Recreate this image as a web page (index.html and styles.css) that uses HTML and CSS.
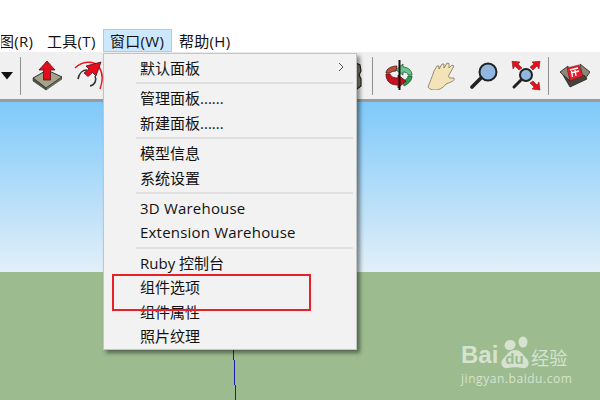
FILE: index.html
```html
<!DOCTYPE html>
<html lang="zh-CN">
<head>
    <meta charset="UTF-8">
    <title>窗口菜单</title>
    <link rel="stylesheet" href="styles.css">
</head>
<body>
    <div class="app">
        <div class="menubar">
            <span class="menubar-item clipped">图(R)</span>
            <span class="menubar-item">工具(T)</span>
            <span class="menubar-item open">窗口(W)</span>
            <span class="menubar-item">帮助(H)</span>
        </div>

        <div class="toolbar">
            <svg class="tool-arrow" width="12" height="8" viewBox="0 0 12 8"><path d="M0 0H12L6 7.500Z" fill="#111"/></svg>
            <span class="tool-sep first"></span>
            <svg class="tool-push" width="30" height="30" viewBox="0 0 30 30">
                <path d="M1 17L15 9L30 16L14 27Z" fill="#a3a38a" stroke="#333" stroke-width="1"/>
                <path d="M1 17L14 27V29L1 20Z" fill="#55553f" stroke="#333" stroke-width=".6"/>
                <path d="M14 27L30 16V18L14 29Z" fill="#77775e" stroke="#333" stroke-width=".6"/>
                <path d="M15 0L23 9H18.500V19H11.500V9H7Z" fill="#e00d1c" stroke="#5a1015" stroke-width=".8"/>
            </svg>
            <svg class="tool-move" width="30" height="30" viewBox="0 0 30 30">
                <path d="M1 7C8 0 20 -1 25 6C29 12 29 20 26 28" fill="none" stroke="#e8141f" stroke-width="1.400"/>
                <path d="M4 18C5 12 9 9 13 9" fill="none" stroke="#333" stroke-width="1.600"/>
                <path d="M21 15C23 19 21 24 16 25" fill="none" stroke="#333" stroke-width="1.600"/>
                <path d="M27 1L22 15L18.500 11.500L14 15.500L10 12L15 8L12 5Z" fill="#e80d1c" stroke="#4a1015" stroke-width=".8"/>
            </svg>
            <span class="tool-hidden">
                <svg width="6" height="28" viewBox="0 0 6 28"><path d="M0 1L4 3L5 9L3 13L5 17L5 24L1 27L0 27Z" fill="#8a8070" stroke="#222" stroke-width="1.200"/></svg>
            </span>
            <span class="tool-sep"></span>
            <svg class="tool-orbit" width="29" height="32" viewBox="0 0 29 32">
                <path d="M1 13C1 9 6 6 12 6L11 11C8 11 6 12 5 13Z" fill="#b85040" stroke="#501512" stroke-width=".8"/>
                <path d="M27 15C27 10 22 7 18 7V4L11 10L18 15V12C21 12 23 13 23 15Z" fill="#6ac58c" stroke="#1d5a38" stroke-width=".8"/>
                <path d="M27 16C27 21 23 24 19 26L18 21C21 20 23 18 23 16Z" fill="#2f9a58" stroke="#1d5a38" stroke-width=".8"/>
                <path d="M1 14C1 22 6 25 13 25V28L21 21L13 15V18C9 18 6 17 5 14Z" fill="#c8101f" stroke="#501512" stroke-width=".8"/>
                <path d="M14.500 0V30" stroke="#111" stroke-width="2"/>
            </svg>
            <svg class="tool-hand" width="28" height="28" viewBox="0 0 28 28">
                <path d="M1 25C3 20 5 15 7 9L10 4L12 4L12 7L15 2L17 2L17 6L20 1L22 1.500L22 6L25 3L27 4L22 13C21 15 22 16 24 16L27 16C28 18 26 19 24 20L19 22C17 25 13 28 8 28C5 28 2 27 1 25Z" fill="#f4e2b8" stroke="#7a7460" stroke-width=".8"/>
            </svg>
            <svg class="tool-zoom" width="28" height="28" viewBox="0 0 28 28">
                <circle cx="18" cy="10" r="8.500" fill="#8fb7df" stroke="#222" stroke-width="2"/>
                <path d="M11 16L2 25" stroke="#222" stroke-width="3.600" stroke-linecap="round"/>
            </svg>
            <svg class="tool-extents" width="30" height="30" viewBox="0 0 30 30">
                <circle cx="15" cy="14" r="6" fill="#8fb7df" stroke="#222" stroke-width="2"/>
                <path d="M10 19L3 26" stroke="#222" stroke-width="3" stroke-linecap="round"/>
                <path d="M1 0L9 1L7 3L11 7L8 9L4 5L2 8ZM29 0L28 8L26 5L22 9L19 6L23 3L21 1ZM29 29L21 28L23 26L19 22L22 20L26 24L28 21Z" fill="#e5101c" stroke="#6a1014" stroke-width=".5"/>
            </svg>
            <span class="tool-sep last"></span>
            <svg class="tool-box" width="30" height="28" viewBox="0 0 30 28">
                <path d="M0 10L8 4L10 19L4 14Z" fill="#8a8878" stroke="#222" stroke-width=".8"/>
                <path d="M20 2L30 10L25 17L22 13Z" fill="#8a8878" stroke="#222" stroke-width=".8"/>
                <path d="M3 13L10 25L27 17L24 13L10 19Z" fill="#44443c" stroke="#222" stroke-width=".8"/>
                <path d="M7 6L19 3L23 14L10 19Z" fill="#e2202c" stroke="#8a1018" stroke-width=".6"/>
                <path d="M10 8L18 6M11 11L19 9M12.500 15L11.500 9M16 14L15 8" stroke="#fff" stroke-width="1.300" fill="none"/>
            </svg>
        </div>

        <div class="viewport">
            <div class="sky"></div>
            <div class="ground"></div>
        </div>
    </div>

    <div class="axis">
        <span class="axis-seg one"></span>
        <span class="axis-seg two"></span>
        <span class="axis-seg three"></span>
    </div>

    <div class="menu">
        <div class="menu-item">默认面板
            <svg class="chevron" width="6" height="10" viewBox="0 0 6 10"><path d="M1 1L5 5L1 9" fill="none" stroke="#555" stroke-width="1"/></svg>
        </div>
        <div class="menu-sep"></div>
        <div class="menu-item">管理面板......</div>
        <div class="menu-item">新建面板......</div>
        <div class="menu-sep"></div>
        <div class="menu-item">模型信息</div>
        <div class="menu-item">系统设置</div>
        <div class="menu-sep"></div>
        <div class="menu-item latin">3D Warehouse</div>
        <div class="menu-item latin">Extension Warehouse</div>
        <div class="menu-sep"></div>
        <div class="menu-item">Ruby 控制台</div>
        <div class="menu-item">组件选项</div>
        <div class="menu-item">组件属性</div>
        <div class="menu-item">照片纹理</div>
    </div>

    <div class="highlight"></div>

    <div class="watermark">
        <div class="wm-top">
            <span class="wm-bai">Bai</span>
            <div class="wm-paw">
                <svg width="31" height="34" viewBox="0 0 31 34">
                    <ellipse cx="11" cy="10" rx="5.500" ry="5" transform="rotate(-20 11 10)"/>
                    <ellipse cx="24" cy="7" rx="4.500" ry="5.500"/>
                    <path d="M16 15C22 15 24 20 28 24C32 29 28 34 23 33C19 32 13 32 9 33C4 34 0 29 4 24C8 20 10 15 16 15Z"/>
                </svg>
                <span class="wm-du">du</span>
            </div>
            <span class="wm-cn">经验</span>
        </div>
        <div class="wm-url">jingyan.baidu.com</div>
    </div>
</body>
</html>
```

FILE: styles.css
```css
html, body {
    margin: 0;
    height: 100%;
    overflow: hidden;
}
body {
    position: relative;
    font-family: "Open Sans", "Noto Sans CJK SC", sans-serif;
    color: #111;
    background-color: white;
}
.app {
    display: flex;
    flex-direction: column;
    height: 400px;
    padding-top: 29px;
    box-sizing: border-box;
}

.menubar {
    display: flex;
    height: 23px;
    font-size: 15px;
    letter-spacing: 0.3px;
}
.menubar-item {
    padding: 0 6px;
    box-sizing: border-box;
    border: 1px solid transparent;
    line-height: 23px;
    white-space: nowrap;
}
.menubar-item.clipped {
    width: 39px;
    padding: 0;
    text-indent: -2px;
    overflow: hidden;
}
.menubar-item:nth-child(2) {
    width: 64px;
    padding-left: 7px;
}
.menubar-item.open {
    width: 69px;
    background-color: #cce8ff;
    border-color: #99d1ff;
}

.toolbar {
    display: flex;
    align-items: center;
    height: 47px;
    flex-shrink: 0;
    background-color: #f0f0f0;
    border-bottom: 3px solid #9b9b9b;
    box-sizing: content-box;
}
.toolbar svg {
    flex-shrink: 0;
}
.tool-arrow {
    margin-left: 1px;
}
.tool-sep {
    width: 1px;
    height: 38px;
    background-color: #8f8f8f;
    flex-shrink: 0;
}
.tool-sep.first {
    margin-left: 7px;
}
.tool-sep.last {
    margin-left: 7px;
}
.tool-push {
    margin-left: 11px;
}
.tool-move {
    margin-left: 12px;
}
.tool-hidden {
    display: flex;
    justify-content: flex-end;
    width: 268px;
    padding-right: 10px;
    box-sizing: border-box;
    flex-shrink: 0;
}
.tool-orbit {
    margin-left: 12px;
}
.tool-hand {
    margin-left: 13px;
}
.tool-zoom {
    margin-left: 15px;
}
.tool-extents {
    margin-left: 13px;
}
.tool-box {
    margin-left: 11px;
}

.viewport {
    flex: 1;
    display: flex;
    flex-direction: column;
}
.sky {
    height: 170px;
    background: linear-gradient(#7fc9fa, #e2eff8);
}
.ground {
    flex: 1;
    background-color: #9cbb8f;
}

/* blue axis, drawn in a few steps like the aliased line */
.axis {
    position: absolute;
    left: 233px;
    top: 350px;
    display: flex;
    flex-direction: column;
}
.axis-seg {
    width: 1px;
    background-color: #1c1cb4;
}
.axis-seg.one {
    height: 10px;
}
.axis-seg.two {
    height: 25px;
    margin-left: 1px;
}
.axis-seg.three {
    height: 15px;
    margin-left: 2px;
}

.menu {
    position: absolute;
    left: 103px;
    top: 53px;
    width: 254px;
    height: 297px;
    padding-top: 2px;
    box-sizing: border-box;
    background-color: #f2f2f2;
    border: 1px solid #c4c4c4;
    box-shadow: 3px 3px 4px rgba(0,0,0,0.45);
    font-size: 15px;
}
.menu-item {
    position: relative;
    height: 24.4px;
    line-height: 25px;
    padding-left: 36px;
    white-space: nowrap;
}
.menu-item.latin {
    letter-spacing: 0.2px;
}
.menu-sep {
    height: 2px;
    margin: 2px 3px 2px 32px;
    background-color: #e0e0e0;
}
.chevron {
    position: absolute;
    right: 12px;
    top: 6px;
}

.highlight {
    position: absolute;
    left: 112px;
    top: 274px;
    width: 199px;
    height: 37px;
    box-sizing: border-box;
    border: 2px solid #ea2029;
}

.watermark {
    position: absolute;
    left: 461px;
    top: 335px;
    color: #d5e3cf;
}
.wm-top {
    display: flex;
    align-items: flex-end;
    height: 34px;
}
.wm-bai {
    font-family: "Liberation Sans", sans-serif;
    font-weight: bold;
    font-size: 24px;
    line-height: 28px;
}
.wm-paw {
    position: relative;
    width: 31px;
    height: 34px;
    margin-left: 1px;
}
.wm-paw svg {
    display: block;
    fill: #d5e3cf;
}
.wm-du {
    position: absolute;
    left: 6px;
    top: 15px;
    font-family: "Liberation Sans", sans-serif;
    font-weight: bold;
    font-size: 15px;
    line-height: 18px;
    color: #9cbb8f;
}
.wm-cn {
    font-family: "Noto Sans CJK SC", sans-serif;
    font-size: 18px;
    line-height: 24px;
    margin-left: 1px;
}
.wm-url {
    font-family: "Open Sans", sans-serif;
    font-size: 12px;
    line-height: 14px;
    letter-spacing: 0.55px;
    margin-top: 3px;
}
```
